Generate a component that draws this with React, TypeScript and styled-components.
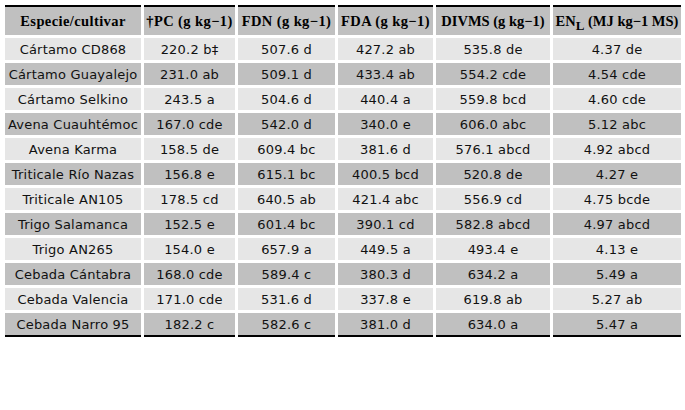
import React from 'react'
import styled, { createGlobalStyle } from 'styled-components'

const GlobalStyle = createGlobalStyle`
  html, body {
    margin: 0;
    padding: 0;
    background: #fff;
  }
`

const Wrap = styled.div`
  padding: 2px;
  width: 685px;
  height: 410px;
  box-sizing: border-box;
  background: #fff;
`

const Table = styled.table`
  border-collapse: separate;
  border-spacing: 3px;
  table-layout: fixed;
  width: 681px;
`

const HeadCell = styled.th<{ $tight?: boolean }>`
  background: #c0c0c0;
  border-top: 2px solid #000;
  height: 28px;
  padding: 0;
  font-family: 'Liberation Serif', 'Times New Roman', serif;
  font-weight: bold;
  font-size: 14.5px;
  letter-spacing: ${p => (p.$tight ? '0' : '0.4px')};
  color: #000;
  text-align: center;
  white-space: nowrap;
  vertical-align: middle;
  overflow: hidden;

  sub {
    font-size: 13px;
    vertical-align: -4px;
    line-height: 0;
  }
`

const Cell = styled.td<{ $dark: boolean; $last: boolean }>`
  background: ${p => (p.$dark ? '#c0c0c0' : '#e6e6e6')};
  border-bottom: ${p => (p.$last ? '2px solid #000' : 'none')};
  height: 22px;
  padding: 0;
  font-family: 'DejaVu Sans', Verdana, sans-serif;
  font-size: 13px;
  letter-spacing: 0.2px;
  color: #111;
  text-align: center;
  white-space: nowrap;
  vertical-align: middle;
`

const widths = [136, 91, 97, 95, 114, 128]

const rows = [
  ['Cártamo CD868', '220.2 b‡', '507.6 d', '427.2 ab', '535.8 de', '4.37 de'],
  ['Cártamo Guayalejo', '231.0 ab', '509.1 d', '433.4 ab', '554.2 cde', '4.54 cde'],
  ['Cártamo Selkino', '243.5 a', '504.6 d', '440.4 a', '559.8 bcd', '4.60 cde'],
  ['Avena Cuauhtémoc', '167.0 cde', '542.0 d', '340.0 e', '606.0 abc', '5.12 abc'],
  ['Avena Karma', '158.5 de', '609.4 bc', '381.6 d', '576.1 abcd', '4.92 abcd'],
  ['Triticale Río Nazas', '156.8 e', '615.1 bc', '400.5 bcd', '520.8 de', '4.27 e'],
  ['Triticale AN105', '178.5 cd', '640.5 ab', '421.4 abc', '556.9 cd', '4.75 bcde'],
  ['Trigo Salamanca', '152.5 e', '601.4 bc', '390.1 cd', '582.8 abcd', '4.97 abcd'],
  ['Trigo AN265', '154.0 e', '657.9 a', '449.5 a', '493.4 e', '4.13 e'],
  ['Cebada Cántabra', '168.0 cde', '589.4 c', '380.3 d', '634.2 a', '5.49 a'],
  ['Cebada Valencia', '171.0 cde', '531.6 d', '337.8 e', '619.8 ab', '5.27 ab'],
  ['Cebada Narro 95', '182.2 c', '582.6 c', '381.0 d', '634.0 a', '5.47 a'],
]

const App: React.FC = () => {
  return (
    <Wrap>
      <GlobalStyle />
      <Table>
        <colgroup>
          {widths.map((w, i) => (
            <col key={i} style={{ width: w }} />
          ))}
        </colgroup>
        <thead>
          <tr>
            <HeadCell>Especie/cultivar</HeadCell>
            <HeadCell>†PC (g kg−1)</HeadCell>
            <HeadCell>FDN (g kg−1)</HeadCell>
            <HeadCell>FDA (g kg−1)</HeadCell>
            <HeadCell $tight>DIVMS (g kg−1)</HeadCell>
            <HeadCell $tight>
              EN<sub>L</sub> (MJ kg−1 MS)
            </HeadCell>
          </tr>
        </thead>
        <tbody>
          {rows.map((r, i) => (
            <tr key={i}>
              {r.map((c, j) => (
                <Cell key={j} $dark={i % 2 === 1} $last={i === rows.length - 1}>
                  {c}
                </Cell>
              ))}
            </tr>
          ))}
        </tbody>
      </Table>
    </Wrap>
  )
}

export default App
